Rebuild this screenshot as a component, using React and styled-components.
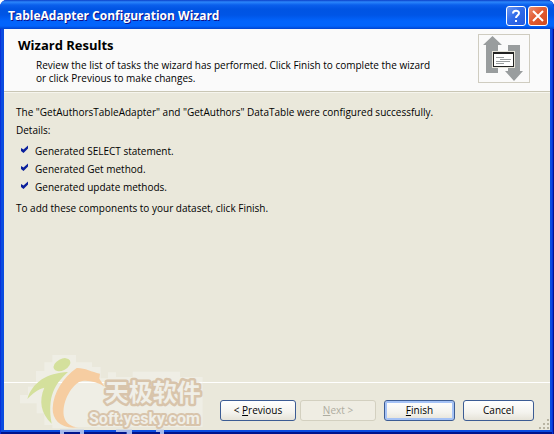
import styled, { createGlobalStyle } from 'styled-components';

const GlobalStyle = createGlobalStyle`
  * {
    box-sizing: border-box;
  }

  body {
    margin: 0;
    background: #ffffff;
    color: #000000;
    font-family: 'Open Sans', 'Noto Sans', sans-serif;
    font-size: 10px;
    line-height: 13px;
  }
`;

const Window = styled.main`
  position: relative;
  display: flex;
  flex-direction: column;
  min-height: 100vh;
  padding: 0 4px 4px;
  border-radius: 7px 7px 0 0;
  background: #0a4be0;
  box-shadow: inset 1px 0 #0831d9, inset -1px 0 #00138c, inset -2px 0 #0831d9,
    inset 0 -2px #00138c;
  overflow: hidden;
`;

const TitleBar = styled.header`
  display: flex;
  align-items: center;
  gap: 2px;
  height: 29px;
  margin: 0 -4px;
  padding: 2px 6px 0 8px;
  background: linear-gradient(
    #0b3fc8 0,
    #2b86fb 2px,
    #0a5fec 5px,
    #0054e3 9px,
    #0055e6 15px,
    #0264fc 21px,
    #0264fc 26px,
    #0043cf 29px
  );
`;

const Title = styled.h1`
  flex: 1;
  margin: 0;
  color: #ffffff;
  font-size: 12px;
  line-height: 18px;
  text-shadow: 1px 1px #0f1089;
`;

const CaptionButton = styled.button`
  display: flex;
  align-items: center;
  justify-content: center;
  width: 20px;
  height: 20px;
  padding: 0;
  border: 1px solid #ffffff;
  border-radius: 3px;
  background: ${({ $danger }) =>
    $danger
      ? 'linear-gradient(135deg, #eb8e70, #e25b32 45%, #d04a20)'
      : 'linear-gradient(135deg, #6c97f2, #316cea 45%, #2459dc)'};
`;

const Banner = styled.section`
  display: flex;
  justify-content: space-between;
  padding: 5px 20px 6px 14px;
  border-bottom: 1px solid #c9c6b5;
  background: #fafafa;
`;

const BannerTitle = styled.h2`
  margin: 4px 0 7px;
  font-size: 13px;
  line-height: 14px;
`;

const BannerText = styled.p`
  margin: 0 0 0 18px;
`;

const Results = styled.section`
  flex: 1;
  padding: 13px 12px;
  border-top: 1px solid #f6f5ee;
  background: #eae8db;

  p {
    margin: 0 0 5px;
  }
`;

const TaskList = styled.ul`
  display: grid;
  gap: 5px;
  margin: 8px 0;
  padding: 0 0 0 4px;
  list-style: none;
`;

const Task = styled.li`
  display: flex;
  gap: 5px;
`;

const Footer = styled.footer`
  display: flex;
  justify-content: flex-end;
  gap: 8px;
  padding: 17px 16px 9px;
  border-top: 1px solid #ffffff;
  background: #eae8db;
`;

const ButtonPair = styled.div`
  display: flex;
  gap: 4px;
`;

const Button = styled.button`
  width: ${({ $wide }) => ($wide ? 76 : 71)}px;
  height: 21px;
  padding: 0;
  border: 1px solid #3c5c94;
  border-radius: 3px;
  background: linear-gradient(#ffffff, #f4f3ee 60%, #e6e3d8);
  box-shadow: ${({ $primary }) =>
    $primary ? 'inset 0 0 0 2px #a5c2f5' : 'none'};
  color: #000000;
  font: inherit;

  &:disabled {
    border-color: #d3d0c0;
    background: #efede3;
    color: #aeac9f;
  }
`;

const WatermarkArt = styled.svg`
  position: absolute;
  left: 0;
  bottom: 0;
  pointer-events: none;
`;

const SizeGrip = styled.svg`
  position: absolute;
  right: 4px;
  bottom: 4px;
`;

const tasks = [
  'Generated SELECT statement.',
  'Generated Get method.',
  'Generated update methods.',
];

const CheckMark = () => (
  <svg width="10" height="10" viewBox="0 0 10 10" aria-hidden="true">
    <path d="M1 3 L3.5 4.5 L8 0.5 V3.5 L3.5 8 L1 6Z" fill="#0a1f9c" />
  </svg>
);

const AdapterIcon = () => (
  <svg width="52" height="49" viewBox="0 0 52 49" aria-hidden="true">
    <rect x="0.5" y="0.5" width="51" height="48" fill="#fafafa" stroke="#cfccc0" />
    <path d="M14.5 2 L24 11 H20 V39 H8 V11 H5Z" fill="#999d9e" />
    <path d="M30 11 H42 V37 H45 L36 47 L27 37 H30Z" fill="#999d9e" />
    <rect x="14" y="17" width="23" height="17" fill="#e6e4da" />
    <rect x="15.5" y="18.5" width="20" height="14" fill="#ffffff" stroke="#222222" />
    <path d="M15 19 H36" stroke="#222222" strokeWidth="2" />
    <path
      d="M18 23.5 H26 M22 25.5 H33 M18 27.5 H32 M18 29.5 H26"
      stroke="#999d9e"
    />
  </svg>
);

const Watermark = () => (
  <WatermarkArt width="220" height="89" viewBox="0 0 660 267">
    <path
      d="M157 30 H228 V52 H276 V66 H302 V100 H324 V82 H348 V96 H398 V80 H540 V96 H608 V246 H230 V250 H157 V240 H133 V205 H110 V175 H60 V150 H84 V125 H108 V78 H133 V52 H157Z"
      fill="#efeee5"
    />
    <path d="M12 112.5 H608" stroke="#ffffff" strokeWidth="3" />
    <ellipse cx="186" cy="59" rx="27" ry="17" transform="rotate(-28 186 59)" fill="#d4e09c" />
    <path
      d="M82 162 C97 112 140 84 204 81 C164 117 141 155 155 236 C122 205 116 167 133 128 C112 133 96 147 82 162Z"
      fill="#d4e09c"
    />
    <path
      d="M230 69 C254 68 274 81 300 86 L298 101 L314 125 C288 109 257 103 237 111 C202 134 184 187 193 218 C199 237 213 244 234 247 C185 254 157 226 158 190 C160 141 190 98 230 69Z"
      fill="#f6cda1"
    />
    <g
      fill="#f0efe8"
      stroke="#d8c4ab"
      strokeLinejoin="round"
      paintOrder="stroke"
      fontWeight="700"
    >
      <text x="314" y="168" fontSize="72" strokeWidth="15" fontFamily="'Noto Sans CJK SC', sans-serif">
        天极软件
      </text>
      <text x="267" y="236" fontSize="48" strokeWidth="12" fontFamily="Roboto, sans-serif">
        Soft.yesky.com
      </text>
    </g>
    <path
      d="M180 254 H252 V267 H240 V261 H192 V267 H180Z M348 254 H396 V267 H380 V261 H348Z M468 254 H492 V267 H480 V261 H468Z"
      fill="#a3b7ec"
    />
  </WatermarkArt>
);

const App = () => {
  return (
    <>
      <GlobalStyle />
      <Window>
        <TitleBar>
          <Title>TableAdapter Configuration Wizard</Title>
          <CaptionButton type="button" aria-label="Help">
            <svg width="14" height="14" viewBox="0 0 14 14">
              <path
                d="M4 4.5 C4 1 10 1 10 4 C10 6.5 7 6.5 7 9 M7 11 V13"
                fill="none"
                stroke="#ffffff"
                strokeWidth="2"
              />
            </svg>
          </CaptionButton>
          <CaptionButton type="button" aria-label="Close" $danger>
            <svg width="14" height="14" viewBox="0 0 14 14">
              <path d="M2 2 L12 12 M12 2 L2 12" stroke="#ffffff" strokeWidth="2" />
            </svg>
          </CaptionButton>
        </TitleBar>
        <Banner>
          <div>
            <BannerTitle>Wizard Results</BannerTitle>
            <BannerText>
              Review the list of tasks the wizard has performed. Click Finish to
              complete the wizard
              <br />
              or click Previous to make changes.
            </BannerText>
          </div>
          <AdapterIcon />
        </Banner>
        <Results>
          <p>
            The "GetAuthorsTableAdapter" and "GetAuthors" DataTable were
            configured successfully.
          </p>
          <p>Details:</p>
          <TaskList>
            {tasks.map((task) => (
              <Task key={task}>
                <CheckMark />
                {task}
              </Task>
            ))}
          </TaskList>
          <p>To add these components to your dataset, click Finish.</p>
        </Results>
        <Footer>
          <ButtonPair>
            <Button type="button" $wide>
              &lt; <u>P</u>revious
            </Button>
            <Button type="button" $wide disabled>
              <u>N</u>ext &gt;
            </Button>
          </ButtonPair>
          <Button type="button" $primary>
            <u>F</u>inish
          </Button>
          <Button type="button">Cancel</Button>
        </Footer>
        <Watermark />
        <SizeGrip width="12" height="12" viewBox="0 0 12 12" aria-hidden="true">
          <path
            d="M9 1h2v2h-2z M5 5h2v2h-2z M9 5h2v2h-2z M1 9h2v2h-2z M5 9h2v2h-2z M9 9h2v2h-2z"
            fill="#b8b4a2"
          />
        </SizeGrip>
      </Window>
    </>
  );
};

export default App;
